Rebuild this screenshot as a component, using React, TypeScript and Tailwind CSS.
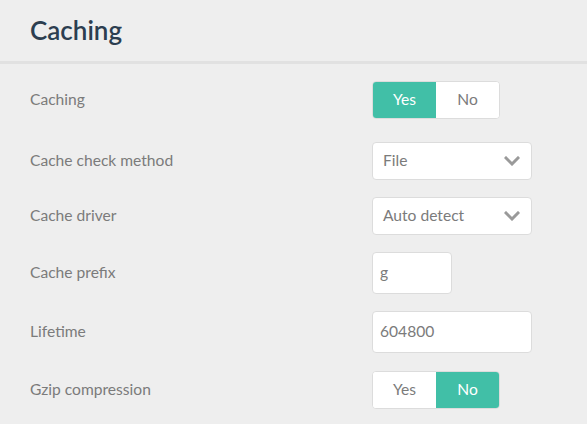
import { ReactNode } from "react";

const font = { fontFamily: "Lato, 'Open Sans', sans-serif" };

function Row({ label, children, className = "" }: { label: string; children: ReactNode; className?: string }) {
  return (
    <div className={`flex items-center ${className}`}>
      <div className="w-[342px] shrink-0 text-[15.6px] text-[#7b7b7b]">{label}</div>
      {children}
    </div>
  );
}

function Toggle({ value }: { value: boolean }) {
  const on = "bg-[#41bfa7] text-white";
  const off = "bg-white text-[#7b7b7b]";
  return (
    <div className="flex h-[38px] w-[128px] overflow-hidden rounded-[4px] border border-[#dcdcdc] bg-white text-[15.6px]">
      <div className={`flex flex-1 items-center justify-center ${value ? on : off}`}>Yes</div>
      <div className={`flex flex-1 items-center justify-center ${value ? off : on}`}>No</div>
    </div>
  );
}

function Select({ value }: { value: string }) {
  return (
    <div className="flex h-[38px] w-[160px] items-center justify-between rounded-[4px] border border-[#dcdcdc] bg-white pl-[10px] pr-[11px] text-[15.6px] text-[#7b7b7b]">
      <span>{value}</span>
      <svg width="16" height="10" viewBox="0 0 16 10" fill="none">
        <path d="M2 2l6 6 6-6" stroke="#9a9a9a" strokeWidth="3" strokeLinecap="square" />
      </svg>
    </div>
  );
}

function Input({ value, w }: { value: string; w: string }) {
  return (
    <div className={`flex h-[42px] items-center rounded-[4px] border border-[#dcdcdc] bg-white pl-[7px] text-[15.6px] text-[#7b7b7b] ${w}`}>
      {value}
    </div>
  );
}

export default function App() {
  return (
    <div style={font} className="h-[424px] w-[587px] overflow-hidden bg-[#eeeeee]">
      <div className="flex h-[64px] items-center border-b-[3px] border-[#e1e1e1] px-[30px]">
        <h1 className="text-[26px] font-semibold text-[#2c3e50]">Caching</h1>
      </div>
      <div className="flex flex-col px-[30px] pt-[17px]">
        <Row label="Caching">
          <Toggle value={true} />
        </Row>
        <Row label="Cache check method" className="mt-[23px]">
          <Select value="File" />
        </Row>
        <Row label="Cache driver" className="mt-[17px]">
          <Select value="Auto detect" />
        </Row>
        <Row label="Cache prefix" className="mt-[17px]">
          <Input value="g" w="w-[80px]" />
        </Row>
        <Row label="Lifetime" className="mt-[17px]">
          <Input value="604800" w="w-[160px]" />
        </Row>
        <Row label="Gzip compression" className="mt-[18px]">
          <Toggle value={false} />
        </Row>
      </div>
    </div>
  );
}
